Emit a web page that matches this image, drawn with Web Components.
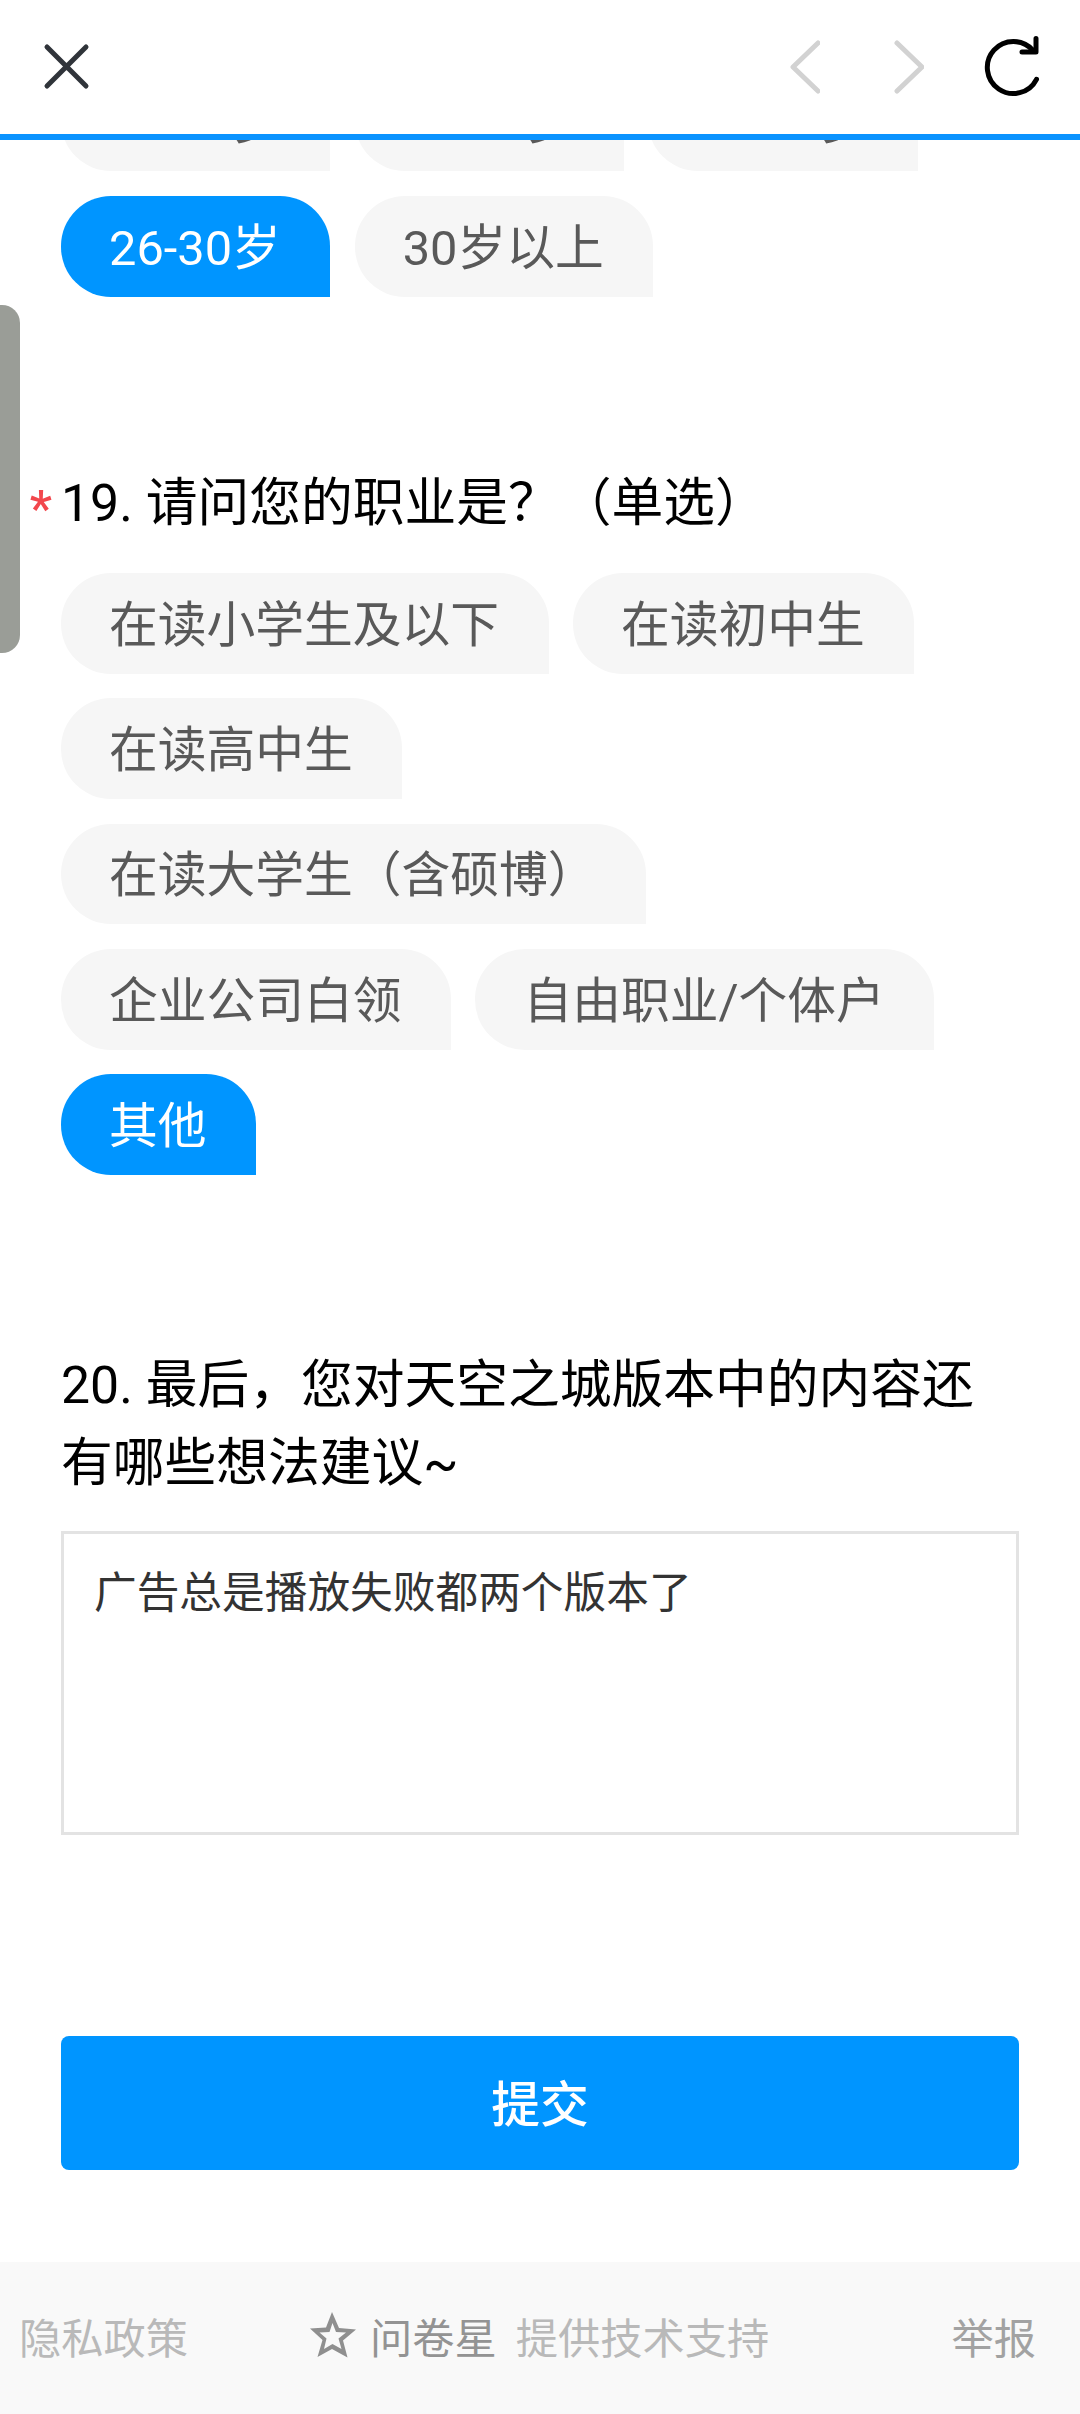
<!DOCTYPE html>
<html lang="zh-CN">
<head>
<meta charset="utf-8">
<title>问卷</title>
<style>
  html, body { margin: 0; padding: 0; background: #fff; }
  body { font-family: Roboto, "Noto Sans CJK SC", sans-serif; }
</style>
</head>
<body>
<survey-page>
  <top-bar slot="bar"></top-bar>
  <side-handle slot="handle"></side-handle>

  <chip-group style="margin-top:-69.4px">
    <choice-chip>10-15岁</choice-chip>
    <choice-chip>16-20岁</choice-chip>
    <choice-chip>21-25岁</choice-chip>
    <choice-chip selected>26-30岁</choice-chip>
    <choice-chip>30岁以上</choice-chip>
  </chip-group>

  <question-title required style="margin-top:164px">19. 请问您的职业是？（单选）</question-title>
  <chip-group style="margin-top:34px">
    <choice-chip>在读小学生及以下</choice-chip>
    <choice-chip>在读初中生</choice-chip>
    <choice-chip>在读高中生</choice-chip>
    <choice-chip>在读大学生（含硕博）</choice-chip>
    <choice-chip>企业公司白领</choice-chip>
    <choice-chip>自由职业/个体户</choice-chip>
    <choice-chip selected>其他</choice-chip>
  </chip-group>

  <question-title style="margin-top:167.500px">20. 最后，您对天空之城版本中的内容还有哪些想法建议~</question-title>
  <answer-box style="margin-top:32.500px">广告总是播放失败都两个版本了</answer-box>
  <submit-button style="margin-top:201px">提交</submit-button>

  <site-footer slot="footer"></site-footer>
</survey-page>

<script>
class SurveyPage extends HTMLElement {
  constructor() {
    super();
    this.attachShadow({ mode: 'open' }).innerHTML = `
    <style>
      :host {
        display: flex;
        flex-direction: column;
        position: relative;
        width: 1080px;
        height: 2414px;
        overflow: hidden;
        background: #fff;
      }
      .scroll {
        flex: 1;
        min-height: 0;
        overflow: hidden;
        display: flex;
        flex-direction: column;
      }
    </style>
    <slot name="bar"></slot>
    <div class="scroll"><slot></slot></div>
    <slot name="footer"></slot>
    <slot name="handle"></slot>`;
  }
}

class TopBar extends HTMLElement {
  constructor() {
    super();
    this.attachShadow({ mode: 'open' }).innerHTML = `
    <style>
      :host {
        display: flex;
        flex: none;
        align-items: center;
        height: 134px;
        padding: 0 36px 0 42px;
        border-bottom: 6px solid #0b93ff;
        background: #fff;
      }
      svg { display: block; flex: none; fill: none; stroke-linecap: round; stroke-linejoin: round; }
      .close { stroke: #30343a; stroke-width: 5; margin-right: auto; }
      .nav { stroke: #d2d2d2; stroke-width: 5; }
      .fwd { margin-left: 74px; }
      .reload { stroke: #000; stroke-width: 5; margin-left: 56px; }
    </style>
    <svg class="close" width="50" height="50" viewBox="0 0 50 50"><path d="M5 5L44 44M44 5L5 44"/></svg>
    <svg class="nav" width="30" height="56" viewBox="0 0 30 56"><path d="M28 4L3 28L28 52"/></svg>
    <svg class="nav fwd" width="30" height="56" viewBox="0 0 30 56"><path d="M3 4L28 28L3 52"/></svg>
    <svg class="reload" width="64" height="68" viewBox="0 0 64 68"><path d="M56.500 46.300A26 26 0 1 1 53 17.500"/><path d="M56 5.500V19H42"/></svg>`;
  }
}

class SideHandle extends HTMLElement {
  constructor() {
    super();
    this.attachShadow({ mode: 'open' }).innerHTML = `
    <style>
      :host {
        display: block;
        position: absolute;
        left: 0;
        top: 305px;
        width: 20px;
        height: 348px;
        background: #9a9d97;
        border-radius: 0 18px 18px 0;
      }
    </style>`;
  }
}

class ChipGroup extends HTMLElement {
  constructor() {
    super();
    this.attachShadow({ mode: 'open' }).innerHTML = `
    <style>
      :host {
        display: flex;
        flex: none;
        flex-wrap: wrap;
        gap: 24.650px 24.400px;
        padding: 0 90px 0 61px;
      }
    </style>
    <slot></slot>`;
  }
}

class ChoiceChip extends HTMLElement {
  constructor() {
    super();
    this.attachShadow({ mode: 'open' }).innerHTML = `
    <style>
      :host {
        display: inline-flex;
        align-items: center;
        box-sizing: border-box;
        height: 100.750px;
        padding: 0 49.500px 6px 48px;
        border-radius: 50px 50px 0 50px;
        background: #f6f6f6;
        color: #595959;
        font-size: 48.750px;
        white-space: nowrap;
      }
      :host([selected]) { background: #0095ff; color: #fff; }
    </style>
    <slot></slot>`;
  }
}

class QuestionTitle extends HTMLElement {
  constructor() {
    super();
    this.attachShadow({ mode: 'open' }).innerHTML = `
    <style>
      :host {
        display: flex;
        flex: none;
        padding-right: 61px;
        color: #000;
        font-size: 51.750px;
        line-height: 78px;
      }
      .mark {
        flex: none;
        width: 61px;
        box-sizing: border-box;
        padding-right: 9px;
        text-align: right;
        color: #f2474d;
        font-size: 50px;
        font-weight: 500;
        position: relative;
        top: 9px;
      }
      .text { flex: 1; min-width: 0; position: relative; top: 4px; }
    </style>
    <span class="mark"></span><span class="text"><slot></slot></span>`;
  }
  connectedCallback() {
    this.shadowRoot.querySelector('.mark').textContent = this.hasAttribute('required') ? '*' : '';
  }
}

class AnswerBox extends HTMLElement {
  constructor() {
    super();
    this.attachShadow({ mode: 'open' }).innerHTML = `
    <style>
      :host {
        display: block;
        flex: none;
        box-sizing: border-box;
        height: 304px;
        margin: 0 61px;
        padding: 25px 30px;
        border: 3px solid #e3e3e3;
        color: #333;
        font-size: 42.700px;
        line-height: 68px;
      }
    </style>
    <slot></slot>`;
  }
}

class SubmitButton extends HTMLElement {
  constructor() {
    super();
    this.attachShadow({ mode: 'open' }).innerHTML = `
    <style>
      :host {
        display: flex;
        flex: none;
        align-items: center;
        justify-content: center;
        box-sizing: border-box;
        height: 134px;
        margin: 0 61px;
        padding-bottom: 6px;
        border-radius: 8px;
        background: #0095ff;
        color: #fff;
        font-size: 48.750px;
        font-weight: 500;
      }
    </style>
    <slot></slot>`;
  }
}

class SiteFooter extends HTMLElement {
  constructor() {
    super();
    this.attachShadow({ mode: 'open' }).innerHTML = `
    <style>
      :host {
        display: flex;
        flex: none;
        align-items: center;
        box-sizing: border-box;
        height: 152px;
        padding: 0 44px 6px 19px;
        background: #f9f9f9;
        color: #b9b9b9;
        font-size: 42.250px;
        white-space: nowrap;
      }
      .brand { display: flex; align-items: center; margin-left: 121.500px; }
      .brand svg { display: block; flex: none; margin-right: 14.500px; fill: #8f8f8f; }
      .name { color: #939393; margin-right: 19px; }
      .report { margin-left: auto; color: #a2a2a2; }
    </style>
    <span>隐私政策</span>
    <span class="brand">
      <svg width="46" height="46" viewBox="0 0 46 46"><path fill-rule="evenodd" d="M22 0L29 16L46 17.500L33 28.500L37.500 45.500L22 37L7.500 45L12.500 28L0 16.500L16 15.500ZM22.500 11L19.500 20L9.500 20.500L16.500 26.500L14 37L22.500 32L31.500 37L28.500 26.500L36 20.500L26 20Z"/></svg>
      <span class="name">问卷星</span><span>提供技术支持</span>
    </span>
    <span class="report">举报</span>`;
  }
}

customElements.define('survey-page', SurveyPage);
customElements.define('top-bar', TopBar);
customElements.define('side-handle', SideHandle);
customElements.define('chip-group', ChipGroup);
customElements.define('choice-chip', ChoiceChip);
customElements.define('question-title', QuestionTitle);
customElements.define('answer-box', AnswerBox);
customElements.define('submit-button', SubmitButton);
customElements.define('site-footer', SiteFooter);
</script>
</body>
</html>
